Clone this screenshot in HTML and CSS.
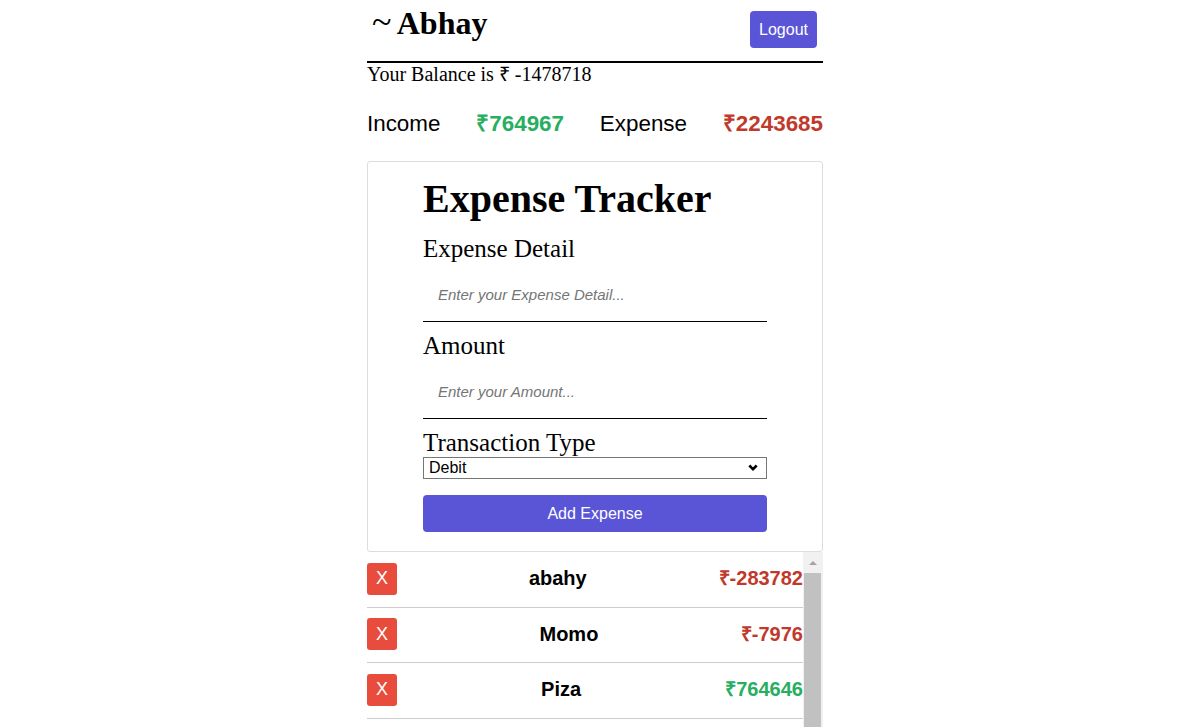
FILE: index.html
```html
<!DOCTYPE html>
<html lang="en">
<head>
<meta charset="utf-8">
<title>Expense Tracker</title>
<link rel="stylesheet" href="styles.css">
</head>
<body>
<div class="app">
  <header class="topbar">
    <h1 class="user"><span class="tilde">~</span> Abhay</h1>
    <button class="btn logout" type="button">Logout</button>
  </header>
  <p class="balance">Your Balance is ₹ -1478718</p>
  <div class="summary">
    <span>Income</span>
    <span class="amt pos">₹764967</span>
    <span>Expense</span>
    <span class="amt neg">₹2243685</span>
  </div>
  <div class="card">
    <form class="form">
      <h1 class="title">Expense Tracker</h1>
      <label class="field-label" for="detail">Expense Detail</label>
      <input id="detail" class="field" type="text" placeholder="Enter your Expense Detail...">
      <label class="field-label" for="amount">Amount</label>
      <input id="amount" class="field" type="text" placeholder="Enter your Amount...">
      <label class="field-label" for="type">Transaction Type</label>
      <div class="select-wrap">
        <select id="type" class="select">
          <option>Debit</option>
          <option>Credit</option>
        </select>
        <svg class="chevron" width="10" height="7" viewBox="0 0 10 7" aria-hidden="true"><path d="M1.3 1.5 L5 5.2 L8.7 1.5" fill="none" stroke="#000" stroke-width="2.5"/></svg>
      </div>
      <button class="btn add" type="button">Add Expense</button>
    </form>
  </div>
  <div class="list-wrap">
    <ul class="list">
      <li class="row"><button class="del" type="button">X</button><span class="name">abahy</span><span class="amt neg">₹-283782</span></li>
      <li class="row"><button class="del" type="button">X</button><span class="name">Momo</span><span class="amt neg">₹-7976</span></li>
      <li class="row"><button class="del" type="button">X</button><span class="name">Piza</span><span class="amt pos">₹764646</span></li>
    </ul>
    <div class="scrollbar" aria-hidden="true">
      <div class="sb-up"><span class="sb-arrow"></span></div>
      <div class="sb-thumb"></div>
    </div>
  </div>
</div>
</body>
</html>
```
FILE: styles.css
```css
html, body {
  margin: 0;
  height: 100%;
  overflow: hidden;
  background: #fff;
}

body {
  font-family: "Liberation Serif", "Times New Roman", serif;
  color: #000;
}

.app {
  width: 456px;
  height: 100vh;
  margin-left: calc(50% - 230px);
  display: flex;
  flex-direction: column;
}

.topbar {
  display: flex;
  justify-content: space-between;
  align-items: flex-start;
  border-bottom: 2px solid #000;
  padding: 0 6px 0 5px;
}

.user {
  margin: 4px 0 0;
  font-size: 32px;
  font-weight: bold;
  line-height: 37px;
}

.tilde {
  font-size: 36px;
  font-weight: normal;
  margin-right: -1px;
}

.btn {
  background: #5a55d6;
  color: #fff;
  border: none;
  border-radius: 4px;
  font-family: "Liberation Sans", Arial, sans-serif;
  font-size: 16px;
  line-height: 18px;
  padding: 9px;
  cursor: pointer;
}

.logout {
  margin: 11px 0 13px;
  padding: 10px 9px 9px;
}

.balance {
  margin: 0;
  font-size: 20px;
  line-height: 23px;
}

.summary {
  display: flex;
  justify-content: space-between;
  margin: 25px 0 24px;
  font-family: "Liberation Sans", Arial, sans-serif;
  font-size: 22.4px;
  line-height: 26px;
}

.amt {
  font-weight: bold;
}

.pos {
  color: #27ae60;
}

.neg {
  color: #c0392b;
}

.card {
  flex: none;
  border: 1px solid #ddd;
  border-radius: 3px;
  padding: 14px 55px 19px;
}

.form {
  display: flex;
  flex-direction: column;
}

.title {
  margin: 0 0 3px;
  font-size: 40px;
  font-weight: bold;
  line-height: 46px;
}

.field-label {
  margin-top: 9px;
  font-size: 25px;
  line-height: 29px;
}

.field {
  margin: 9px 0 0;
  border: none;
  border-bottom: 1px solid #000;
  border-radius: 0;
  padding: 14px 15px 18px;
  font-family: "Liberation Sans", Arial, sans-serif;
  font-size: 15px;
  line-height: 17px;
  outline: none;
  background: #fff;
}

.field::placeholder {
  font-style: italic;
  color: #757575;
}

.select-wrap {
  position: relative;
  display: flex;
}

.select {
  flex: 1;
  height: 22px;
  margin: 0;
  font-family: "Liberation Sans", Arial, sans-serif;
  font-size: 16px;
  line-height: 20px;
  color: #000;
  border: 1px solid #767676;
  border-radius: 0;
  background-color: #fff;
  padding: 0 0 0 5px;
  appearance: none;
  -webkit-appearance: none;
}

.chevron {
  position: absolute;
  right: 9px;
  top: 7px;
  pointer-events: none;
}

.add {
  margin-top: 16px;
  width: 100%;
  padding: 10px 9px 9px;
}

.list-wrap {
  flex: 1;
  min-height: 0;
  display: flex;
  overflow: hidden;
}

.list {
  flex: 1;
  list-style: none;
  margin: 0;
  padding: 0;
}

.row {
  display: flex;
  justify-content: space-between;
  align-items: center;
  padding: 10.5px 0 12px;
  border-bottom: 1px solid #ccc;
  font-family: "Liberation Sans", Arial, sans-serif;
  font-size: 20px;
  font-weight: bold;
  line-height: 23px;
}

.del {
  width: 30px;
  height: 32px;
  padding: 0;
  background: #e74c3c;
  color: #fff;
  border: none;
  border-radius: 3px;
  font-family: "Liberation Sans", Arial, sans-serif;
  font-size: 18px;
  font-weight: normal;
  cursor: pointer;
}

.scrollbar {
  width: 20px;
  background: #f1f1f1;
  display: flex;
  flex-direction: column;
}

.sb-up {
  height: 21px;
  display: flex;
  align-items: center;
  justify-content: center;
  padding-right: 1px;
}

.sb-arrow {
  width: 0;
  height: 0;
  border-left: 4px solid transparent;
  border-right: 4px solid transparent;
  border-bottom: 4px solid #a3a3a3;
}

.sb-thumb {
  flex: 1;
  margin: 0 2px 0 1px;
  background: #c1c1c1;
}
```
